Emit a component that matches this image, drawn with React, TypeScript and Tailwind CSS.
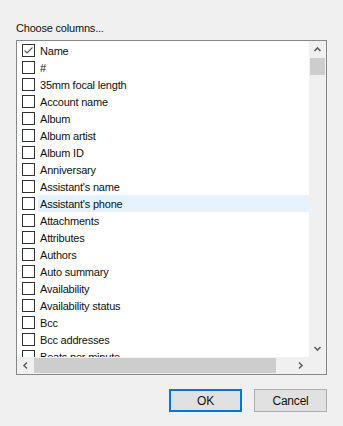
const columns = [
  'Name',
  '#',
  '35mm focal length',
  'Account name',
  'Album',
  'Album artist',
  'Album ID',
  'Anniversary',
  "Assistant's name",
  "Assistant's phone",
  'Attachments',
  'Attributes',
  'Authors',
  'Auto summary',
  'Availability',
  'Availability status',
  'Bcc',
  'Bcc addresses',
  'Beats per minute',
]

function Chevron({ dir }: { dir: 'up' | 'down' | 'left' | 'right' }) {
  const paths = {
    up: 'M1.5 6 L4.5 3 L7.5 6',
    down: 'M1.5 3 L4.5 6 L7.5 3',
    left: 'M6 1.5 L3 4.5 L6 7.5',
    right: 'M3 1.5 L6 4.5 L3 7.5',
  }
  return (
    <svg width="9" height="9" viewBox="0 0 9 9">
      <path d={paths[dir]} fill="none" stroke="#606060" strokeWidth="1.6" />
    </svg>
  )
}

function CheckRow({ label, checked, hover }: { label: string; checked?: boolean; hover?: boolean }) {
  return (
    <div className="flex h-[17px] items-center pl-[5px]">
      <div className="flex h-[13px] w-[13px] shrink-0 items-center justify-center border border-[#333333] bg-white">
        {checked && (
          <svg width="11" height="11" viewBox="0 0 11 11">
            <path d="M1.5 5.5 L4 8 L9.5 2.5" fill="none" stroke="#555555" strokeWidth="1.1" />
          </svg>
        )}
      </div>
      <div
        className={
          'ml-[3px] flex h-[17px] flex-1 items-center whitespace-nowrap pl-[2px] pt-px ' +
          (hover ? 'bg-[#e5f3ff]' : '')
        }
      >
        {label}
      </div>
    </div>
  )
}

export default function App() {
  return (
    <div
      className="flex h-[426px] w-[343px] flex-col bg-[#f0f0f0] px-4 pt-[20px] text-[11px] tracking-[-0.2px] text-[#111]"
      style={{ fontFamily: '"Liberation Sans", Arial, sans-serif' }}
    >
      <div className="h-[16px] leading-[16px]">Choose columns...</div>

      {/* List box */}
      <div className="mt-[4px] grid h-[335px] w-[311px] grid-cols-[1fr_17px] grid-rows-[1fr_17px] border border-[#828790] bg-white">
        <div className="overflow-hidden pt-px">
          {columns.map((c, i) => (
            <CheckRow key={c} label={c} checked={i === 0} hover={i === 9} />
          ))}
        </div>

        {/* Vertical scrollbar */}
        <div className="flex flex-col bg-[#f0f0f0]">
          <div className="flex h-[17px] items-center justify-center">
            <Chevron dir="up" />
          </div>
          <div className="mx-px h-[17px] bg-[#cdcdcd]" />
          <div className="flex-1" />
          <div className="flex h-[17px] items-center justify-center">
            <Chevron dir="down" />
          </div>
        </div>

        {/* Horizontal scrollbar */}
        <div className="flex bg-[#f0f0f0]">
          <div className="flex w-[17px] items-center justify-center">
            <Chevron dir="left" />
          </div>
          <div className="my-px w-[242px] bg-[#cdcdcd]" />
          <div className="flex-1" />
          <div className="flex w-[17px] items-center justify-center">
            <Chevron dir="right" />
          </div>
        </div>
        <div className="bg-[#f0f0f0]" />
      </div>

      {/* Buttons */}
      <div className="mt-[14px] flex w-[311px] justify-end gap-3">
        <button className="h-[23px] w-[73px] border-2 border-[#0078d7] bg-[#e1e1e1] text-[12px]">OK</button>
        <button className="h-[23px] w-[73px] border border-[#adadad] bg-[#e1e1e1] text-[12px]">Cancel</button>
      </div>
    </div>
  )
}
